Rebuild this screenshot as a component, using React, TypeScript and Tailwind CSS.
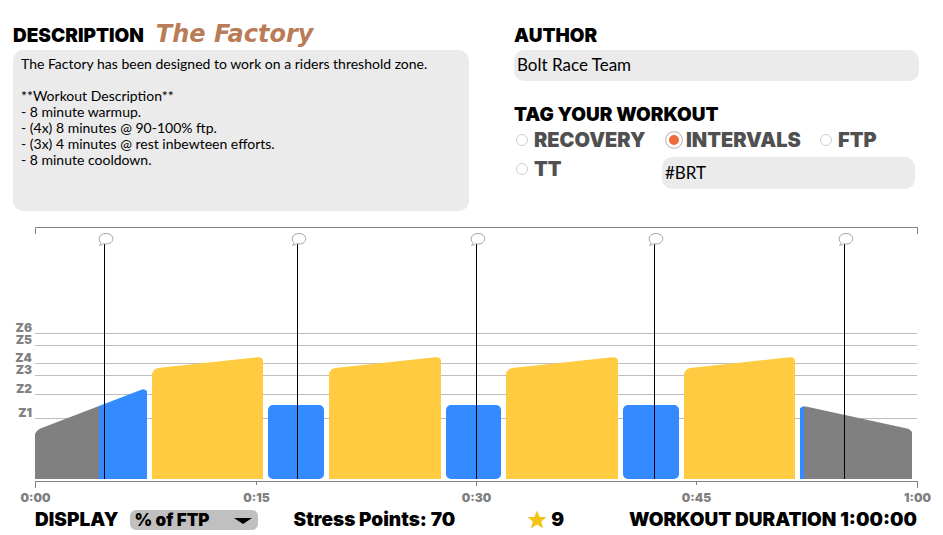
import React from "react";

const heading = "font-['Inter',sans-serif] text-[19px] leading-6 font-black text-black";
const field = "bg-[#ebebeb] rounded-[10px] text-black outline-none font-['Lato',sans-serif]";

const description = `The Factory has been designed to work on a riders threshold zone.

**Workout Description**
- 8 minute warmup.
- (4x) 8 minutes @ 90-100% ftp.
- (3x) 4 minutes @ rest inbewteen efforts.
- 8 minute cooldown.`;

const zones = [
  { name: "Z6", y: 113.5 },
  { name: "Z5", y: 125.5 },
  { name: "Z4", y: 143.5 },
  { name: "Z3", y: 155.5 },
  { name: "Z2", y: 174.5 },
  { name: "Z1", y: 198.5 },
];

const times = [
  { label: "0:00", x: 35.5, tick: 268 },
  { label: "0:15", x: 256.5, tick: 265 },
  { label: "0:30", x: 476.5, tick: 266 },
  { label: "0:45", x: 696.5, tick: 265 },
  { label: "1:00", x: 917.5, tick: 268 },
];

const efforts = [
  { x: 152, w: 111 },
  { x: 329, w: 112 },
  { x: 506, w: 112 },
  { x: 684, w: 111 },
];

const rests = [
  { x: 268, w: 56 },
  { x: 446, w: 55 },
  { x: 623, w: 56 },
];

const comments = [104.5, 297.5, 476.5, 654.5, 844.5];

function Chart() {
  return (
    <svg viewBox="0 0 943 288" className="block w-full" role="img" aria-label="Workout profile">
      <path d="M35.5 14V7.5H917.5V14" fill="none" stroke="#808080" />
      {zones.map((z) => (
        <g key={z.name}>
          <line x1="35" x2="917" y1={z.y} y2={z.y} stroke="#bdbdbd" />
          <text x="32" y={z.y - 2} textAnchor="end" className="fill-[#808080] font-['Inter',sans-serif] text-xs font-black">
            {z.name}
          </text>
        </g>
      ))}
      <path d="M35 259V214Q37 209 43 207.500L99 186V259Z" fill="#808080" />
      <path d="M99 259V186L142 169.500Q144 168.500 147 171V259Z" fill="#338bff" />
      {efforts.map((e) => (
        <path
          key={e.x}
          d={`M${e.x} 259V154Q${e.x + 1} 149 ${e.x + 6} 148L${e.x + e.w - 8} 137.500Q${e.x + e.w} 136 ${e.x + e.w} 141V259Z`}
          fill="#ffcb40"
        />
      ))}
      {rests.map((r) => (
        <rect key={r.x} x={r.x} y="185" width={r.w} height="74" rx="5" fill="#338bff" />
      ))}
      <path d="M800 259V188L804 186V259Z" fill="#338bff" />
      <path d="M804 259V186.500L806 186.500L907 208.500Q909 208.500 912 212V259Z" fill="#808080" />
      {comments.map((x) => (
        <g key={x}>
          <line x1={x} x2={x} y1="24" y2="259" stroke="#000" />
          <path
            d={`M${x - 5} 25.300C${x - 4} 24.500 ${x - 3.5} 23.700 ${x - 3.5} 22.700C${x - 7} 20 ${x - 5.500} 13.500 ${x + 1.5} 13.500C${x + 10.500} 13.500 ${x + 10.500} 24 ${x + 1.5} 24C${x + 0.5} 24 ${x - 0.5} 23.900 ${x - 1.200} 23.700C${x - 2} 24.700 ${x - 3.500} 25.300 ${x - 5} 25.300Z`}
            fill="#fff"
            stroke="#a3a3a3"
          />
        </g>
      ))}
      <line x1="35" x2="918" y1="261.500" y2="261.500" stroke="#808080" />
      {times.map((t) => (
        <g key={t.label}>
          <line x1={t.x} x2={t.x} y1="261" y2={t.tick} stroke="#808080" />
          <text x={t.x} y="282" textAnchor="middle" className="fill-[#808080] font-['Inter',sans-serif] text-xs font-black">
            {t.label}
          </text>
        </g>
      ))}
    </svg>
  );
}

function Tag({ label, checked }: { label: string; checked?: boolean }) {
  return (
    <label className="flex items-center gap-1 font-['Inter',sans-serif] text-xl leading-[26px] font-black text-[#505050]">
      <span className="flex w-4 shrink-0 justify-center">
        <input
          type="radio"
          name="tag"
          defaultChecked={checked}
          className="size-3 shrink-0 appearance-none rounded-full border border-[#cfcfcf] bg-white checked:size-[18px] checked:border-[#c8c8c8] checked:bg-[#ee6c3c] checked:shadow-[inset_0_0_0_3px_#fff]"
        />
      </span>
      {label}
    </label>
  );
}

export default function App() {
  return (
    <main className="min-h-screen bg-white">
      <div className="grid grid-cols-[456fr_405fr] gap-x-[45px] pt-5 pr-6 pl-[13px]">
        <section>
          <div className="flex h-[30px] items-end gap-3">
            <label htmlFor="description" className={`${heading} pb-0.5`}>
              DESCRIPTION
            </label>
            <h1 className="pb-1 font-['DejaVu_Sans',sans-serif] text-2xl leading-6 font-bold text-[#b97c56] italic">The Factory</h1>
          </div>
          <textarea
            id="description"
            defaultValue={description}
            className={`${field} block h-[161px] w-full resize-none px-2 pt-1.5 text-sm leading-4`}
          />
        </section>
        <section>
          <div className="flex h-[30px] items-end">
            <label htmlFor="author" className={`${heading} pb-0.5`}>
              AUTHOR
            </label>
          </div>
          <input id="author" defaultValue="Bolt Race Team" className={`${field} block h-[31px] w-full px-[3px] pb-0.5 text-[17px]`} />
          <fieldset className="mt-[22px]">
            <legend className={heading}>TAG YOUR WORKOUT</legend>
            <div className="grid grid-cols-[152px_152px_1fr]">
              <Tag label="RECOVERY" />
              <Tag label="INTERVALS" checked />
              <Tag label="FTP" />
            </div>
            <div className="mt-[3px] grid grid-cols-[148px_1fr] items-start pr-1">
              <Tag label="TT" />
              <input
                aria-label="Custom tag"
                defaultValue="#BRT"
                className={`${field} mt-px block h-8 w-full px-[3px] pb-0.5 text-[17px]`}
              />
            </div>
          </fieldset>
        </section>
      </div>
      <div className="mt-[9px]">
        <Chart />
      </div>
      <footer className={`${heading} grid grid-cols-[259fr_234fr_102fr_auto] items-center pr-[26px] pl-[35px]`}>
        <div className="flex items-center gap-3">
          <label htmlFor="display">DISPLAY</label>
          <div className="relative">
            <select id="display" className="block h-5 w-32 appearance-none rounded-md bg-[#c0c0c0] pl-1 text-[17px] leading-5 font-black">
              <option>% of FTP</option>
            </select>
            <svg viewBox="0 0 18 6" className="pointer-events-none absolute top-2 right-1.5 h-1.5 w-[18px]">
              <path d="M0 0H18L9 6Z" />
            </svg>
          </div>
        </div>
        <span>Stress Points: 70</span>
        <span className="flex items-center gap-1">
          <svg viewBox="0 0 20 20" className="size-5">
            <path d="M10 0.500L12.700 7H19.500L14.200 11.500L16.200 18.500L10 14.600L3.800 18.500L5.800 11.500L0.500 7H7.300Z" fill="#f3c416" />
          </svg>
          9
        </span>
        <span>WORKOUT DURATION 1:00:00</span>
      </footer>
    </main>
  );
}
